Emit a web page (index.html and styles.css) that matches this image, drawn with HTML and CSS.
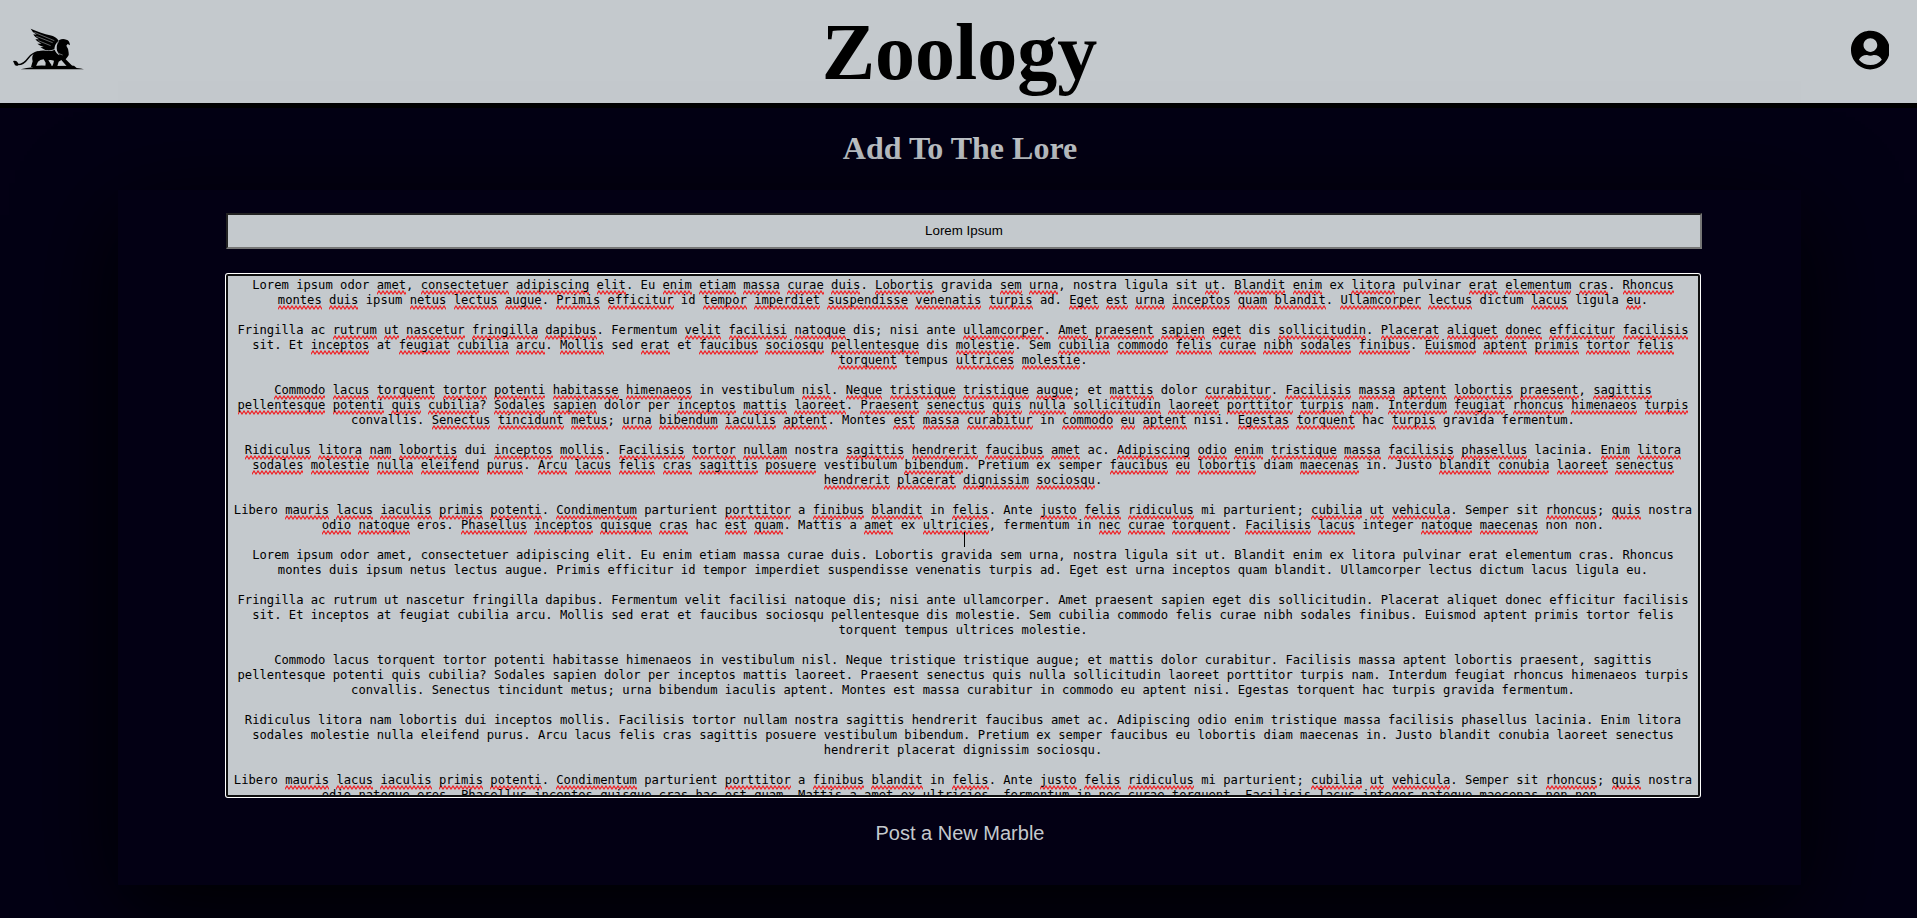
FILE: index.html
```html
<!DOCTYPE html>
<html lang="en">
<head>
<meta charset="utf-8">
<title>Zoology</title>
<link rel="stylesheet" href="styles.css">
</head>
<body>
<header class="topbar">
  <svg class="logo" viewBox="0 0 330 309" aria-label="Griffin">
    <path d="M62 208Q80 203 98 202L100 198Q120 195 142 197L160 198L222 197L230 204Q244 205 252 208Z"/>
    <path d="M92 86Q125 100 150 106Q168 110 176 122Q164 132 163 148Q150 153 136 150L121 142L131 141Q118 137 112 131L124 131Q110 125 106 118L117 118Q103 110 100 103L110 104Q96 96 92 86Z"/>
    <path d="M178 120Q188 115 199 119Q209 121 210 136L203 132L199 137Q207 148 206 158Q208 165 203 170L197 178L215 196L222 201L203 202L184 180L176 185L172 199L156 200Q161 190 162 182Q153 179 145 181L155 196L151 202L136 201L137 188L131 178Q120 179 114 185L107 201L93 201L98 184Q94 169 102 160Q116 149 139 152Q154 155 164 149Q169 162 179 166Q168 151 170 140Q171 126 178 120Z"/>
    <path class="tail" d="M116 155Q97 158 85 174Q70 195 53 194L45 190"/>
    <path d="M39 183Q48 181 52 186L56 192L52 198L45 196Z"/>
    <path class="feather" d="M103 97L163 122M109 109L158 128M115 122L152 137M176 124Q164 139 169 153Q175 163 188 165"/>
  </svg>
  <h1 class="brand">Zoology</h1>
  <svg class="user" viewBox="0 0 496 512" aria-label="Account"><path d="M248 8C111 8 0 119 0 256s111 248 248 248 248-111 248-248S385 8 248 8zm0 96c48.6 0 88 39.4 88 88s-39.4 88-88 88-88-39.4-88-88 39.4-88 88-88zm0 344c-58.7 0-111.3-26.6-146.5-68.2 18.8-35.4 55.6-59.8 98.5-59.8 2.4 0 4.8.4 7.1 1.1 13 4.2 26.6 6.9 40.9 6.9 14.3 0 28-2.7 40.9-6.9 2.3-.7 4.7-1.1 7.1-1.1 42.9 0 79.7 24.4 98.5 59.8C359.3 421.4 306.7 448 248 448z"/></svg>
</header>
<h2 class="heading">Add To The Lore</h2>
<main class="panel">
  <div class="title-field">Lorem Ipsum</div>
  <div class="editor">
<p>Lorem ipsum odor <u>amet</u>, <u>consectetuer</u> <u>adipiscing</u> <u>elit</u>. Eu <u>enim</u> <u>etiam</u> <u>massa</u> <u>curae</u> <u>duis</u>. <u>Lobortis</u> gravida <u>sem</u> <u>urna</u>, nostra ligula sit <u>ut</u>. <u>Blandit</u> <u>enim</u> ex <u>litora</u> pulvinar <u>erat</u> <u>elementum</u> <u>cras</u>. <u>Rhoncus</u><br><u>montes</u> <u>duis</u> ipsum <u>netus</u> <u>lectus</u> <u>augue</u>. <u>Primis</u> <u>efficitur</u> id <u>tempor</u> <u>imperdiet</u> <u>suspendisse</u> <u>venenatis</u> <u>turpis</u> ad. <u>Eget</u> <u>est</u> <u>urna</u> <u>inceptos</u> <u>quam</u> <u>blandit</u>. <u>Ullamcorper</u> <u>lectus</u> dictum <u>lacus</u> ligula <u>eu</u>.</p>
<p>Fringilla ac <u>rutrum</u> <u>ut</u> <u>nascetur</u> <u>fringilla</u> <u>dapibus</u>. Fermentum <u>velit</u> <u>facilisi</u> <u>natoque</u> dis; nisi ante <u>ullamcorper</u>. <u>Amet</u> <u>praesent</u> <u>sapien</u> <u>eget</u> dis <u>sollicitudin</u>. <u>Placerat</u> <u>aliquet</u> <u>donec</u> <u>efficitur</u> <u>facilisis</u><br>sit. Et <u>inceptos</u> at <u>feugiat</u> <u>cubilia</u> <u>arcu</u>. <u>Mollis</u> sed <u>erat</u> et <u>faucibus</u> <u>sociosqu</u> <u>pellentesque</u> dis <u>molestie</u>. Sem <u>cubilia</u> <u>commodo</u> <u>felis</u> <u>curae</u> <u>nibh</u> <u>sodales</u> <u>finibus</u>. <u>Euismod</u> <u>aptent</u> <u>primis</u> <u>tortor</u> <u>felis</u><br><u>torquent</u> tempus <u>ultrices</u> <u>molestie</u>.</p>
<p><u>Commodo</u> <u>lacus</u> <u>torquent</u> <u>tortor</u> <u>potenti</u> <u>habitasse</u> <u>himenaeos</u> in vestibulum <u>nisl</u>. <u>Neque</u> <u>tristique</u> <u>tristique</u> <u>augue</u>; et <u>mattis</u> dolor <u>curabitur</u>. <u>Facilisis</u> <u>massa</u> <u>aptent</u> <u>lobortis</u> <u>praesent</u>, <u>sagittis</u><br><u>pellentesque</u> <u>potenti</u> <u>quis</u> <u>cubilia</u>? <u>Sodales</u> <u>sapien</u> dolor per <u>inceptos</u> <u>mattis</u> <u>laoreet</u>. <u>Praesent</u> <u>senectus</u> <u>quis</u> <u>nulla</u> <u>sollicitudin</u> <u>laoreet</u> <u>porttitor</u> <u>turpis</u> <u>nam</u>. <u>Interdum</u> <u>feugiat</u> <u>rhoncus</u> <u>himenaeos</u> <u>turpis</u><br>convallis. <u>Senectus</u> <u>tincidunt</u> <u>metus</u>; <u>urna</u> <u>bibendum</u> <u>iaculis</u> <u>aptent</u>. Montes <u>est</u> <u>massa</u> <u>curabitur</u> in <u>commodo</u> <u>eu</u> <u>aptent</u> nisi. <u>Egestas</u> <u>torquent</u> hac <u>turpis</u> gravida fermentum.</p>
<p><u>Ridiculus</u> <u>litora</u> <u>nam</u> <u>lobortis</u> dui <u>inceptos</u> <u>mollis</u>. <u>Facilisis</u> <u>tortor</u> <u>nullam</u> nostra <u>sagittis</u> <u>hendrerit</u> <u>faucibus</u> <u>amet</u> ac. <u>Adipiscing</u> <u>odio</u> <u>enim</u> <u>tristique</u> <u>massa</u> <u>facilisis</u> <u>phasellus</u> lacinia. <u>Enim</u> <u>litora</u><br><u>sodales</u> <u>molestie</u> <u>nulla</u> <u>eleifend</u> <u>purus</u>. <u>Arcu</u> <u>lacus</u> <u>felis</u> <u>cras</u> <u>sagittis</u> <u>posuere</u> vestibulum <u>bibendum</u>. Pretium ex semper <u>faucibus</u> <u>eu</u> <u>lobortis</u> diam <u>maecenas</u> in. Justo <u>blandit</u> <u>conubia</u> <u>laoreet</u> <u>senectus</u><br><u>hendrerit</u> <u>placerat</u> <u>dignissim</u> <u>sociosqu</u>.</p>
<p>Libero <u>mauris</u> <u>lacus</u> <u>iaculis</u> <u>primis</u> <u>potenti</u>. <u>Condimentum</u> parturient <u>porttitor</u> a <u>finibus</u> <u>blandit</u> in <u>felis</u>. Ante <u>justo</u> <u>felis</u> <u>ridiculus</u> mi parturient; <u>cubilia</u> <u>ut</u> <u>vehicula</u>. Semper sit <u>rhoncus</u>; <u>quis</u> nostra<br><u>odio</u> <u>natoque</u> eros. <u>Phasellus</u> <u>inceptos</u> <u>quisque</u> <u>cras</u> hac <u>est</u> <u>quam</u>. Mattis a <u>amet</u> ex <u>ultricies</u>, fermentum in <u>nec</u> <u>curae</u> <u>torquent</u>. <u>Facilisis</u> <u>lacus</u> integer <u>natoque</u> <u>maecenas</u> non non.</p>
<div class="caret-line"><span class="caret"></span></div>
<p>Lorem ipsum odor amet, consectetuer adipiscing elit. Eu enim etiam massa curae duis. Lobortis gravida sem urna, nostra ligula sit ut. Blandit enim ex litora pulvinar erat elementum cras. Rhoncus<br>montes duis ipsum netus lectus augue. Primis efficitur id tempor imperdiet suspendisse venenatis turpis ad. Eget est urna inceptos quam blandit. Ullamcorper lectus dictum lacus ligula eu.</p>
<p>Fringilla ac rutrum ut nascetur fringilla dapibus. Fermentum velit facilisi natoque dis; nisi ante ullamcorper. Amet praesent sapien eget dis sollicitudin. Placerat aliquet donec efficitur facilisis<br>sit. Et inceptos at feugiat cubilia arcu. Mollis sed erat et faucibus sociosqu pellentesque dis molestie. Sem cubilia commodo felis curae nibh sodales finibus. Euismod aptent primis tortor felis<br>torquent tempus ultrices molestie.</p>
<p>Commodo lacus torquent tortor potenti habitasse himenaeos in vestibulum nisl. Neque tristique tristique augue; et mattis dolor curabitur. Facilisis massa aptent lobortis praesent, sagittis<br>pellentesque potenti quis cubilia? Sodales sapien dolor per inceptos mattis laoreet. Praesent senectus quis nulla sollicitudin laoreet porttitor turpis nam. Interdum feugiat rhoncus himenaeos turpis<br>convallis. Senectus tincidunt metus; urna bibendum iaculis aptent. Montes est massa curabitur in commodo eu aptent nisi. Egestas torquent hac turpis gravida fermentum.</p>
<p>Ridiculus litora nam lobortis dui inceptos mollis. Facilisis tortor nullam nostra sagittis hendrerit faucibus amet ac. Adipiscing odio enim tristique massa facilisis phasellus lacinia. Enim litora<br>sodales molestie nulla eleifend purus. Arcu lacus felis cras sagittis posuere vestibulum bibendum. Pretium ex semper faucibus eu lobortis diam maecenas in. Justo blandit conubia laoreet senectus<br>hendrerit placerat dignissim sociosqu.</p>
<p>Libero <u>mauris</u> <u>lacus</u> <u>iaculis</u> <u>primis</u> <u>potenti</u>. <u>Condimentum</u> parturient <u>porttitor</u> a <u>finibus</u> <u>blandit</u> in <u>felis</u>. Ante <u>justo</u> <u>felis</u> <u>ridiculus</u> mi parturient; <u>cubilia</u> <u>ut</u> <u>vehicula</u>. Semper sit <u>rhoncus</u>; <u>quis</u> nostra<br>odio natoque eros. Phasellus inceptos quisque cras hac est quam. Mattis a amet ex ultricies, fermentum in nec curae torquent. Facilisis lacus integer natoque maecenas non non.</p>
  </div>
  <button class="post">Post a New Marble</button>
</main>
</body>
</html>
```
FILE: styles.css
```css
* { box-sizing: border-box; }
html, body { height: 100%; }
body {
  margin: 0;
  background: #030014;
  font-family: "Liberation Serif", "Times New Roman", serif;
  overflow: hidden;
}
.topbar {
  display: grid;
  grid-template-columns: 110px 1fr 110px;
  align-items: center;
  height: 108px;
  background: #c4c9cd;
  border-bottom: 5px solid #000;
}
.logo { display: block; width: 110px; height: 103px; }
.logo path { fill: #000; }
.logo .tail { fill: none; stroke: #000; stroke-width: 4; }
.logo .feather { fill: none; stroke: #c4c9cd; stroke-width: 1.5; }
.brand {
  margin: 0;
  padding: 1px 0 0 2px;
  font-size: 80px;
  line-height: 92px;
  text-align: center;
  color: #000;
}
.user { width: 38.75px; height: 40px; margin: -3px 0 0 43.5px; }
.heading {
  margin: 0;
  padding: 22px 0 0 3px;
  height: 82px;
  font-size: 32px;
  line-height: 37px;
  text-align: center;
  color: #c4c9cd;
}
.panel {
  position: relative;
  width: 1683px;
  height: 695px;
  margin-left: 118px;
  padding: 23px 99px 0 108px;
  background: #030014;
  box-shadow: 0 25px 90px #000;
  display: flex;
  flex-direction: column;
  align-items: flex-start;
}
.title-field {
  width: 1476px;
  height: 36px;
  border: 2px solid;
  border-color: #222 #767676 #767676 #222;
  background: #c4c9cd;
  font: 13.333px/32px "Liberation Sans", Arial, sans-serif;
  text-align: center;
  color: #000;
}
.editor {
  width: 1474px;
  height: 523px;
  margin-top: 25px;
  padding-top: 2px;
  border: 2px solid #101010;
  border-radius: 2px;
  box-shadow: 0 0 0 1px #fff;
  background: #c4c9cd;
  font: 12.188px/15px "DejaVu Sans Mono", monospace;
  text-align: center;
  white-space: nowrap;
  color: #000;
  overflow: hidden;
}
.editor p { margin: 0 0 15px; }
.editor u {
  text-decoration: none;
  padding-bottom: 3px;
  background: url("data:image/svg+xml,%3Csvg xmlns='http://www.w3.org/2000/svg' width='4' height='5'%3E%3Cpath d='M-1 2.5L0 4L2 1L4 4L5 2.5' fill='none' stroke='%23f01c20' stroke-width='1.2'/%3E%3C/svg%3E") 0 100% repeat-x;
}
.caret-line {
  display: flex;
  justify-content: center;
  height: 15px;
  margin-top: -16px;
  margin-bottom: 1px;
  padding-left: 3px;
}
.caret { width: 1px; background: #000; }
.post {
  align-self: flex-start;
  width: 1468px;
  height: 46px;
  margin-top: 13px;
  padding: 0;
  border: 0;
  background: none;
  font: 20px "Liberation Sans", Arial, sans-serif;
  color: #c4c9cd;
}
```
